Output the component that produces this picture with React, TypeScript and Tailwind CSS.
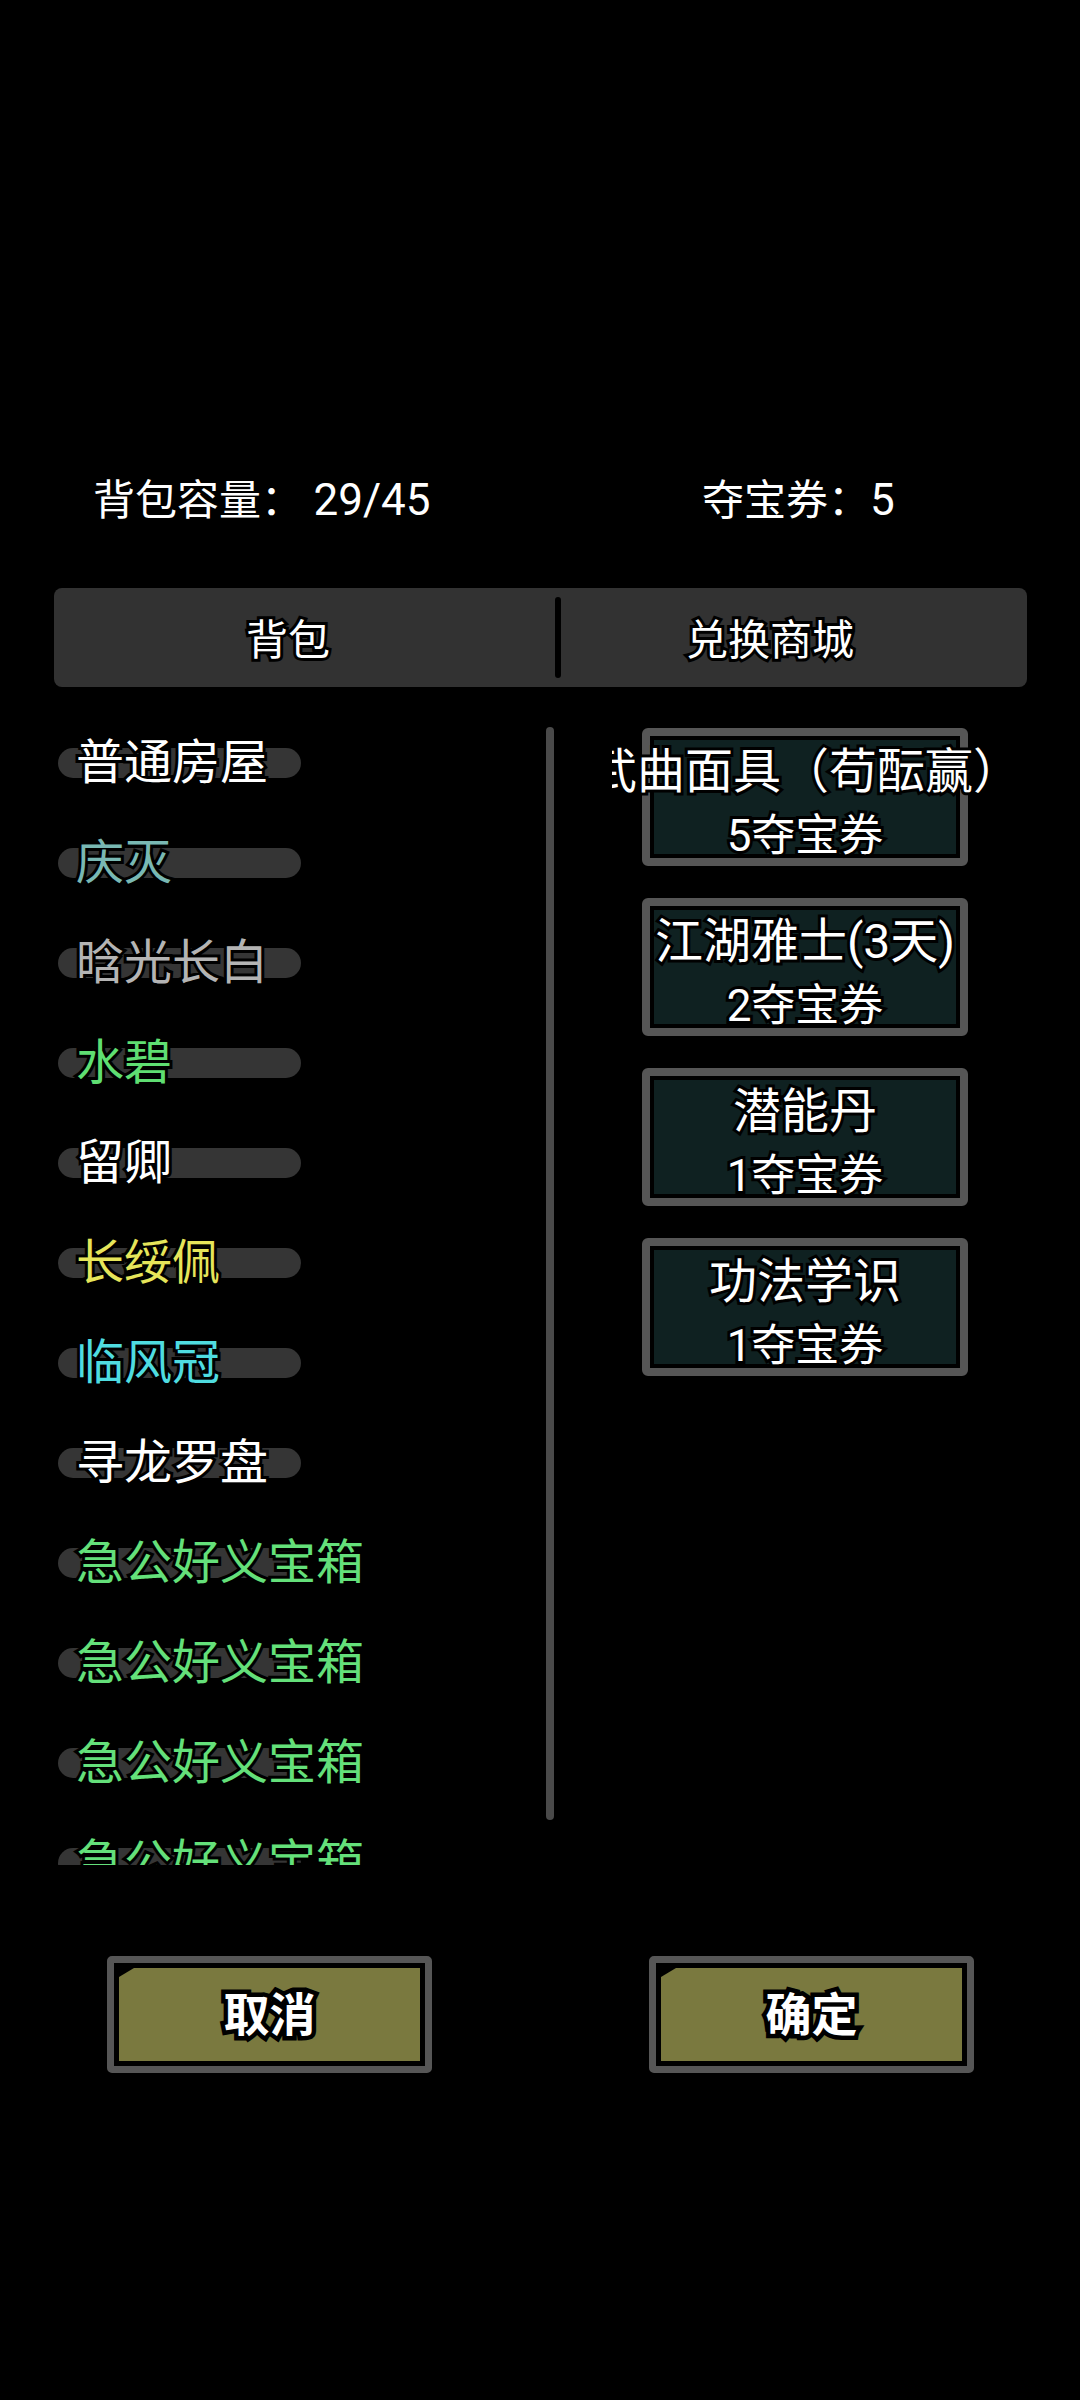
import React from "react";

const items: { name: string; color: string }[] = [
  { name: "普通房屋", color: "text-white" },
  { name: "庆灭", color: "text-[#79b8b3]" },
  { name: "晗光长白", color: "text-[#b4b4b4]" },
  { name: "水碧", color: "text-[#5fde72]" },
  { name: "留卿", color: "text-white" },
  { name: "长绥佩", color: "text-[#e6e55a]" },
  { name: "临风冠", color: "text-[#4fdce0]" },
  { name: "寻龙罗盘", color: "text-white" },
  { name: "急公好义宝箱", color: "text-[#64e07a]" },
  { name: "急公好义宝箱", color: "text-[#64e07a]" },
  { name: "急公好义宝箱", color: "text-[#64e07a]" },
  { name: "急公好义宝箱", color: "text-[#64e07a]" },
];

const shop: { title: string; price: string }[] = [
  { title: "武曲面具（苟酝赢）", price: "5夺宝券" },
  { title: "江湖雅士(3天)", price: "2夺宝券" },
  { title: "潜能丹", price: "1夺宝券" },
  { title: "功法学识", price: "1夺宝券" },
];

const outline = "[-webkit-text-stroke:6px_#000] [paint-order:stroke_fill]";

function GameButton({ label }: { label: string }) {
  return (
    <div className="w-[325px] h-[117px] border-[7px] border-[#565656] rounded-[5px] bg-black p-[5px]">
      <div className="w-full h-full bg-[#7a793f] [clip-path:polygon(15px_0,100%_0,100%_100%,0_100%,0_9px)] flex items-center justify-center">
        <span className="text-[46px] leading-none font-bold text-white [-webkit-text-stroke:9px_#000] [paint-order:stroke_fill]">
          {label}
        </span>
      </div>
    </div>
  );
}

export default function App() {
  return (
    <div
      className="w-[1080px] h-[2400px] bg-black text-white overflow-hidden"
      style={{ fontFamily: 'Roboto, "Noto Sans CJK SC", sans-serif' }}
    >
      <div className="h-[450px]" />
      {/* header */}
      <div className="h-[100px] flex items-center pl-[93px] text-[42px] leading-[100px] text-white">
        <span className="w-[609px] whitespace-pre">
          背包容量： <span className="text-[44px]">29/45</span>
        </span>
        <span>
          夺宝券：<span className="text-[44px]">5</span>
        </span>
      </div>
      {/* tabs */}
      <div className="mt-[38px] ml-[54px] w-[973px] h-[99px] bg-[#323232] rounded-[8px] flex items-center">
        <div className={`w-[468px] text-center text-[42px] leading-none pt-[6px] text-white ${outline}`}>背包</div>
        <div className="ml-[33px] w-[6px] h-[81px] bg-black rounded-full" />
        <div className={`w-[418px] text-center text-[42px] leading-none pt-[6px] text-white ${outline}`}>兑换商城</div>
      </div>
      {/* content */}
      <div className="mt-[26px] h-[1152px] flex">
        <div className="w-[540px] h-full overflow-hidden pl-[58px]">
          {items.map((it, i) => (
            <div key={i} className="h-[100px] grid items-center">
              <div className="col-start-1 row-start-1 w-[243px] h-[30px] rounded-full bg-[#353535]" />
              <div
                className={`col-start-1 row-start-1 pl-[18px] text-[48px] leading-[100px] whitespace-nowrap ${it.color} ${outline}`}
              >
                {it.name}
              </div>
            </div>
          ))}
        </div>
        <div className="ml-[6px] mt-[14px] w-[8px] h-[1093px] bg-[#4a4a4a] rounded-full" />
        <div className="ml-[58px] w-[386px] h-full overflow-hidden pt-[15px] flex flex-col items-center gap-[32px]">
          {shop.map((s, i) => (
            <div
              key={i}
              className="w-[326px] h-[138px] shrink-0 border-[8px] border-[#565656] rounded-[6px] bg-[#0f2121] shadow-[inset_0_0_0_4px_#000] flex flex-col items-center pt-[4px]"
            >
              <div className={`text-[48px] leading-[64px] whitespace-nowrap text-white ${outline}`}>{s.title}</div>
              <div className={`text-[44px] leading-[64px] whitespace-nowrap text-white ${outline}`}>{s.price}</div>
            </div>
          ))}
        </div>
      </div>
      {/* buttons */}
      <div className="mt-[91px] flex pl-[107px] gap-[217px]">
        <GameButton label="取消" />
        <GameButton label="确定" />
      </div>
    </div>
  );
}
